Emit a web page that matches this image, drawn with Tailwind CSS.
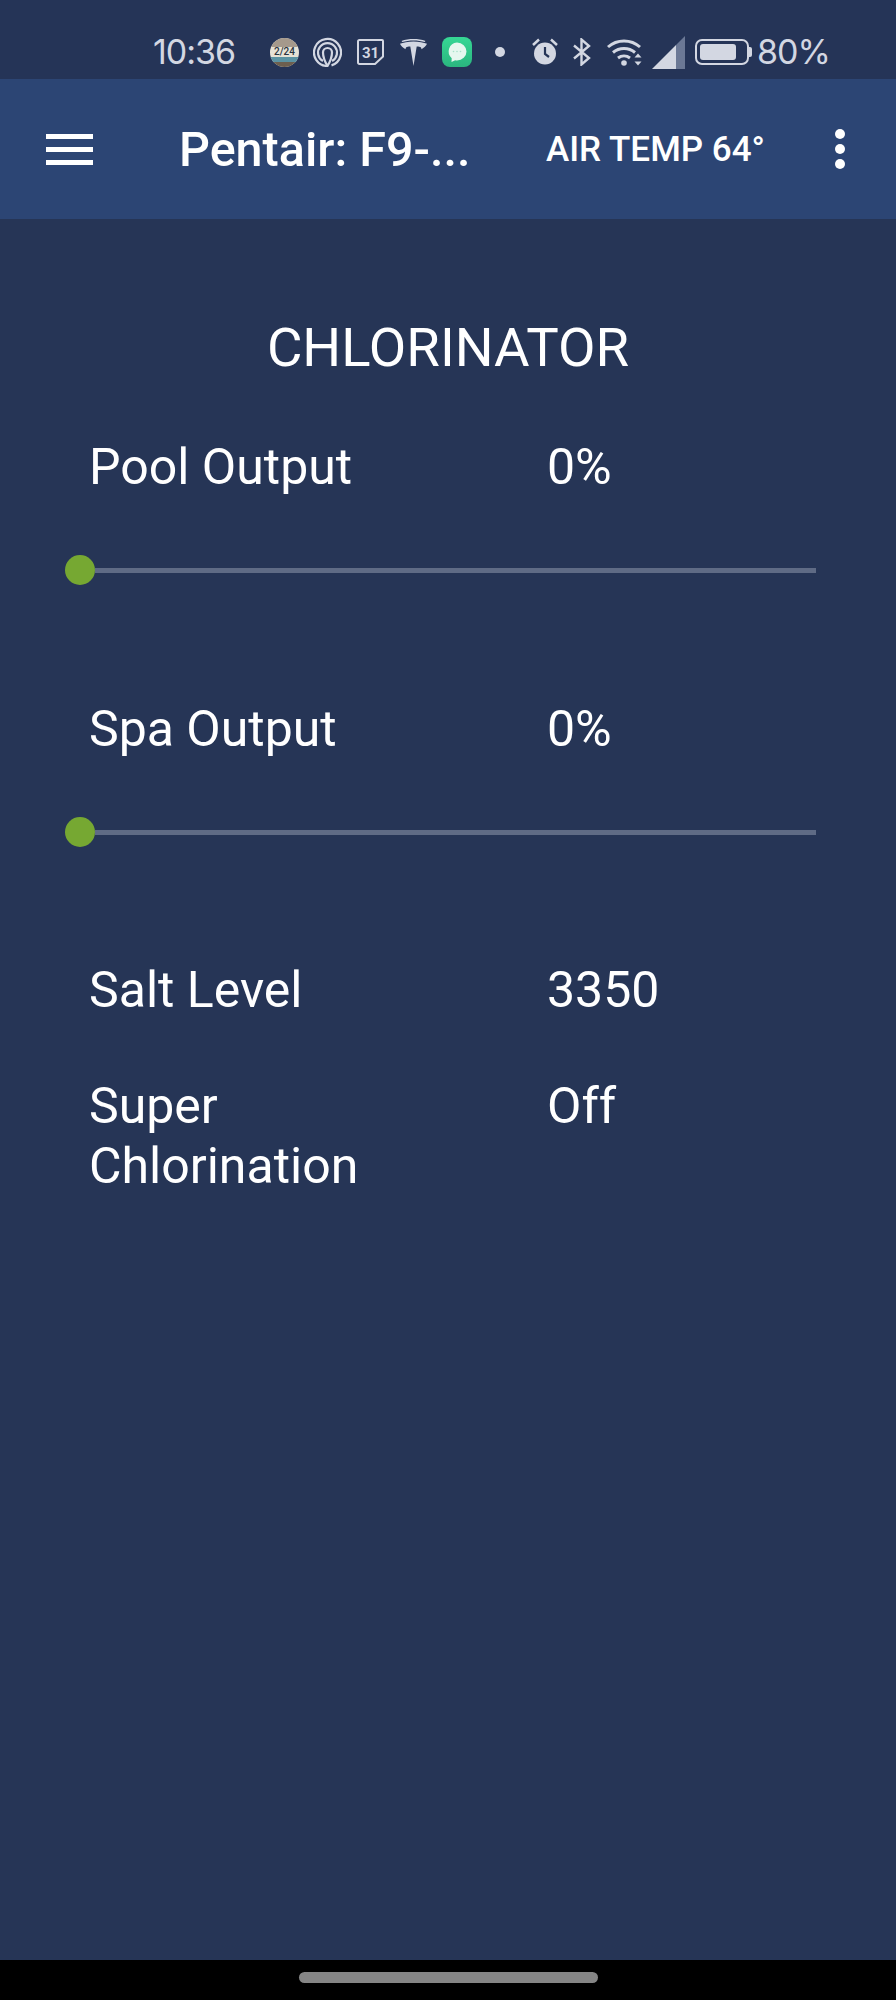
<!DOCTYPE html>
<html lang="en">
<head>
  <meta charset="UTF-8" />
  <meta name="viewport" content="width=device-width, initial-scale=1" />
  <title>Pentair: F9 - Chlorinator</title>
  <script src="https://cdn.jsdelivr.net/npm/@tailwindcss/browser@4"></script>
</head>
<body class="font-['Roboto',sans-serif] bg-[#263556] text-white">
  <div class="flex flex-col h-[2000px] w-[896px] overflow-hidden">

    <!-- Status bar -->
    <div class="h-[79px] shrink-0 flex items-center pl-[153px] pt-[25px] text-[#d3d7e2] bg-[#253457]">
      <span class="w-[85px] text-[34px] leading-[40px] font-['Inter',sans-serif] tracking-[-1px]">10:36</span>
      <!-- photo widget -->
      <div class="ml-[32px] w-[29px] h-[29px] rounded-full overflow-hidden flex flex-col items-center bg-[#e6e2d6]">
        <div class="h-[9px] w-full shrink-0 bg-[#a5998c]"></div>
        <span class="h-[9px] text-[10px] leading-[9px] font-medium text-[#2a3340]">2/24</span>
        <div class="h-[5px] w-full shrink-0 mt-[1px] bg-[#5b93a3]"></div>
        <div class="h-[5px] w-full shrink-0 bg-[#6d5f4f]"></div>
      </div>
      <!-- rings -->
      <svg class="ml-[14px]" width="29" height="30" viewBox="0 0 29 30" fill="none" stroke="currentColor" stroke-width="2.2">
        <path d="M14.500 29A13.500 13.500 0 1 1 18.500 28.400" />
        <path d="M10 24a9.500 9.500 0 1 1 9 0" />
        <path d="M14.500 29C11.500 24 10 19.500 10 15.500a4.500 4.500 0 0 1 9 0c0 4-1.500 8.500-4.500 13.500z" />
      </svg>
      <!-- calendar -->
      <svg class="ml-[15px]" width="27" height="26" viewBox="0 0 27 26" fill="none">
        <path d="M2.500 1H25a1 1 0 0 1 1 1v15.500L18 25H2.500A1.500 1.500 0 0 1 1 23.500v-21A1.500 1.500 0 0 1 2.500 1z" stroke="#d3d7e2" stroke-width="2" />
        <text x="13.500" y="18.500" text-anchor="middle" font-family="Roboto, sans-serif" font-size="15" font-weight="700" fill="#d3d7e2">31</text>
      </svg>
      <!-- tesla -->
      <svg class="ml-[16px]" width="27" height="27" viewBox="0 0 27 27" fill="currentColor">
        <path d="M13.500 27 10.300 7.500c-1-.1-3.300.1-4 .8-.7.700-.8 1.900-.8 1.900C3 8.800.8 7 0 4.800 3 3.300 8.300 2.400 13.500 2.400S24 3.300 27 4.800c-.8 2.200-3 4-5.500 5.400 0 0-.1-1.200-.8-1.900-.7-.7-3-.9-4-.8z" />
        <path d="M1.500 2C5 .6 9.300 0 13.500 0s8.500.6 12 2l-.8 1C21.500 1.900 17.500 1.400 13.500 1.400S5.500 1.900 2.300 3z" />
      </svg>
      <!-- messages app -->
      <div class="ml-[15px] w-[30px] h-[30px] rounded-[8px] bg-linear-to-b from-[#36d795] to-[#2bb67f] flex items-center justify-center">
        <svg width="22" height="22" viewBox="0 0 22 22">
          <path d="M11 1.500a9.500 9 0 0 1 0 18c-.7 0-1.200-.1-1.800-.2L5.500 21l.2-3.800A9 9 0 0 1 11 1.500z" fill="#e6f7ef" />
          <circle cx="7.500" cy="10.500" r="0.800" fill="#a8e2ca" />
          <circle cx="11" cy="10.500" r="0.800" fill="#a8e2ca" />
          <circle cx="14.500" cy="10.500" r="0.800" fill="#a8e2ca" />
        </svg>
      </div>
      <div class="ml-[23px] w-[10px] h-[10px] rounded-full bg-[#d3d7e2]"></div>
      <!-- alarm -->
      <svg class="ml-[27px]" width="26" height="28" viewBox="0 0 26 28">
        <path d="M1 7 7 1.500M25 7l-6-5.500" stroke="#d3d7e2" stroke-width="2.500" fill="none" />
        <circle cx="13" cy="15.500" r="11" fill="#d3d7e2" />
        <path d="M13 9v7l4 3" stroke="#253457" stroke-width="2.200" fill="none" />
      </svg>
      <!-- bluetooth -->
      <svg class="ml-[15px]" width="18" height="28" viewBox="0 0 18 28" fill="none" stroke="#d3d7e2" stroke-width="2.400">
        <path d="M1 7.500 16 20 8.500 26.500V1.500L16 8 1 20.500" />
      </svg>
      <!-- wifi -->
      <svg class="ml-[16px]" width="36" height="28" viewBox="0 0 36 28" fill="none" stroke="#d3d7e2" stroke-width="3">
        <path d="M1 9a24 24 0 0 1 32 0" />
        <path d="M6 14.500a17 17 0 0 1 22 0" />
        <path d="M11 20a10 10 0 0 1 12 0" />
        <circle cx="17" cy="25" r="2.800" fill="#d3d7e2" stroke="none" />
        <path d="M31 15.500l-3.500 4h7zM31 27.500l-3.500-4h7z" fill="#d3d7e2" stroke="none" />
      </svg>
      <!-- signal -->
      <svg class="ml-[9px]" width="33" height="33" viewBox="0 0 33 33">
        <path d="M0 33 24 9v24z" fill="#d3d7e2" />
        <path d="M24 9 33 0v33h-9z" fill="#6b7895" />
      </svg>
      <!-- battery -->
      <div class="ml-[10px] flex items-center">
        <div class="w-[54px] h-[26px] border-[2px] border-[#d3d7e2] rounded-[7px] p-[3px]">
          <div class="w-[36px] h-full rounded-[3px] bg-[#d3d7e2]"></div>
        </div>
        <div class="w-[3px] h-[10px] rounded-r-[2px] bg-[#d3d7e2]"></div>
      </div>
      <span class="ml-[5px] text-[34px] leading-[40px] font-['Inter',sans-serif] tracking-[-1px]">80%</span>
    </div>

    <!-- App bar -->
    <header class="h-[140px] shrink-0 flex items-center bg-[#2c4574]">
      <div class="ml-[46px] w-[47px] flex flex-col gap-[8px]">
        <div class="h-[5px] bg-white"></div>
        <div class="h-[5px] bg-white"></div>
        <div class="h-[5px] bg-white"></div>
      </div>
      <h1 class="ml-[86px] w-[302px] text-[48.5px] leading-[56px] font-medium whitespace-nowrap pt-[2px]">Pentair: F9-...</h1>
      <span class="ml-[65px] w-[224px] text-[35px] font-medium leading-[40px] whitespace-nowrap pt-[2px]">AIR TEMP 64°</span>
      <div class="ml-[65px] flex flex-col gap-[5px]">
        <div class="w-[10px] h-[10px] rounded-full bg-white"></div>
        <div class="w-[10px] h-[10px] rounded-full bg-white"></div>
        <div class="w-[10px] h-[10px] rounded-full bg-white"></div>
      </div>
    </header>

    <!-- Chlorinator -->
    <main class="flex-1 pt-[98px] text-[50px] leading-[60px]">
      <h2 class="text-center text-[54.5px]">CHLORINATOR</h2>

      <div class="flex mt-[60px] pl-[89px]">
        <div class="w-[458px]">Pool Output</div>
        <div>0%</div>
      </div>
      <div class="flex mt-[58px] ml-[65px] w-[751px]">
        <div class="w-[30px] h-[30px] rounded-full bg-[#76a832]"></div>
        <div class="flex-1 h-[5px] mt-[13px] bg-[#5f6b85]"></div>
      </div>

      <div class="flex mt-[114px] pl-[89px]">
        <div class="w-[458px]">Spa Output</div>
        <div>0%</div>
      </div>
      <div class="flex mt-[58px] ml-[65px] w-[751px]">
        <div class="w-[30px] h-[30px] rounded-full bg-[#76a832]"></div>
        <div class="flex-1 h-[5px] mt-[13px] bg-[#5f6b85]"></div>
      </div>

      <div class="flex mt-[113px] pl-[89px]">
        <div class="w-[458px]">Salt Level</div>
        <div>3350</div>
      </div>
      <div class="flex mt-[56px] pl-[89px]">
        <div class="w-[458px] pr-[150px]">Super Chlorination</div>
        <div>Off</div>
      </div>
    </main>

    <!-- Gesture bar -->
    <div class="h-[40px] shrink-0 bg-black flex justify-center pt-[12px]">
      <div class="w-[299px] h-[11px] rounded-full bg-[#858585]"></div>
    </div>
  </div>
</body>
</html>
